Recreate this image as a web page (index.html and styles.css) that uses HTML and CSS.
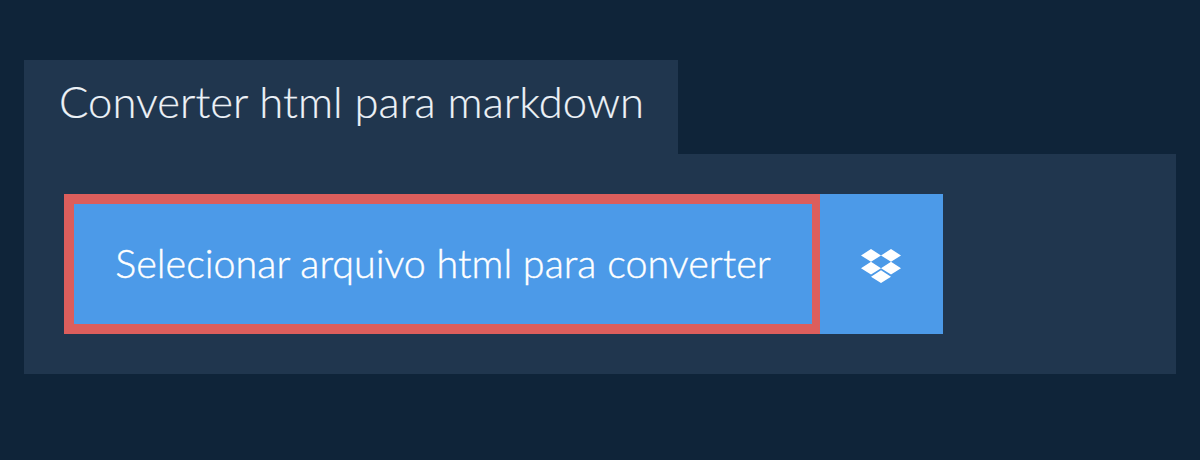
FILE: index.html
```html
<!DOCTYPE html>
<html lang="pt">
  <head>
    <meta charset="UTF-8" />
    <title>Converter html para markdown</title>
    <link rel="stylesheet" href="styles.css">
  </head>
  <body>
    <div class="converter">
      <h1 class="tab-title">Converter html para markdown</h1>
      <div class="panel">
        <div class="picker">
          <button class="select-btn">Selecionar arquivo html para converter</button>
          <button class="dropbox-btn" aria-label="Dropbox">
            <svg class="dropbox-icon" viewBox="0 0 40 34" width="40" height="34">
              <path d="M10 0 0 6.4l10 6.4 10-6.4zM30 0 20 6.4l10 6.4 10-6.4zM0 19.2l10 6.4 10-6.4-10-6.4zM30 12.8l-10 6.4 10 6.4 10-6.4zM10 27.7 20 34l10-6.3-10-6.4z" fill="#fff"/>
            </svg>
          </button>
        </div>
      </div>
    </div>
  </body>
</html>
```

FILE: styles.css
```css
body {
  margin: 0;
  height: 460px;
  overflow: hidden;
  background-color: #0f2439;
  font-family: Lato, "Open Sans", sans-serif;
}
.converter {
  padding: 60px 24px 0;
}
.tab-title {
  width: 654px;
  height: 94px;
  margin: 0;
  padding: 13px 0 0 35px;
  box-sizing: border-box;
  background-color: #20364e;
  color: #edf2f7;
  font-size: 43.6px;
  font-weight: 300;
  line-height: 56px;
  white-space: nowrap;
  -webkit-text-stroke: 0.2px #edf2f7;
}
.panel {
  height: 220px;
  padding: 40px;
  box-sizing: border-box;
  background-color: #20364e;
}
.picker {
  display: flex;
  height: 140px;
}
.select-btn {
  width: 756px;
  padding: 0 0 3px;
  border: solid #dc5e5c;
  border-width: 10px 8px 10px 10px;
  background-color: #4c9ae8;
  color: #fff;
  font-family: inherit;
  font-size: 39.5px;
  font-weight: 300;
  -webkit-text-stroke: 0.4px #fff;
}
.dropbox-btn {
  display: flex;
  align-items: center;
  justify-content: center;
  width: 123px;
  padding: 4px 2px 0 0;
  border: 0;
  background-color: #4c9ae8;
}
```
